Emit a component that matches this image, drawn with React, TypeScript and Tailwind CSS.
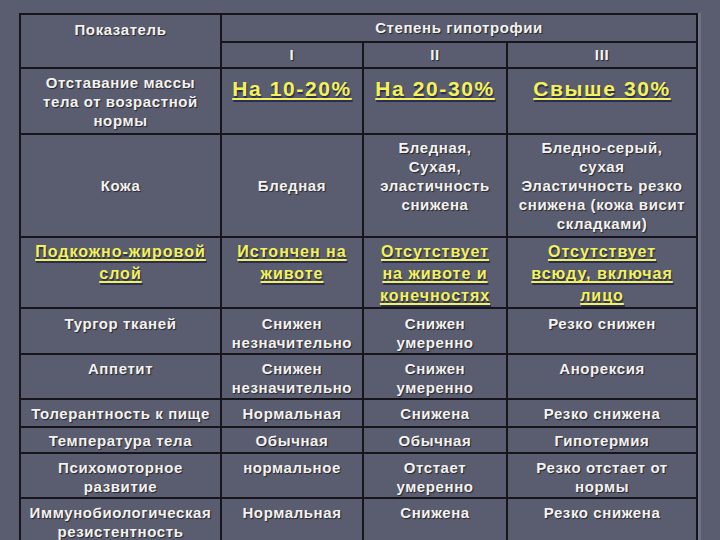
import React from "react";

const W = "text-[15px] leading-[19px] font-bold tracking-[0.6px] text-[#f2f2f2] [text-shadow:1px_1px_1px_rgba(0,0,0,0.6)] whitespace-nowrap";
const Y = "text-[16px] leading-[22px] font-bold tracking-[1px] text-[#f3f355] underline decoration-2 underline-offset-[2px] [text-decoration-skip-ink:none] [text-shadow:1px_2px_1px_#2a2c58] whitespace-nowrap";
const YB = "text-[21px] leading-[26px] font-bold tracking-[1.6px] text-[#f3f355] underline decoration-2 underline-offset-[2px] [text-decoration-skip-ink:none] [text-shadow:1px_2px_1px_#2a2c58] whitespace-nowrap";
const cell = "border-2 border-[#15151b] text-center px-1 p-0";

export default function App() {
  return (
    <div className="w-[720px] h-[540px] overflow-hidden bg-[#5a5d6f] font-['Liberation_Sans',Arial,sans-serif] pt-[13px] pl-[19px]">
      <table className="table-fixed border-collapse w-[679px] shadow-[3px_0_0_#6e7284]">
        <colgroup>
          <col className="w-[201px]" />
          <col className="w-[142px]" />
          <col className="w-[144px]" />
          <col className="w-[190px]" />
        </colgroup>
        <tbody>
          <tr className="h-[28px]">
            <td rowSpan={2} className={`${cell} align-top pt-[3px]`}>
              <span className={W}>Показатель</span>
            </td>
            <td colSpan={3} className={`${cell} align-middle`}>
              <span className={W}>Степень гипотрофии</span>
            </td>
          </tr>
          <tr className="h-[25px]">
            <td className={`${cell} align-middle`}><span className={W}>I</span></td>
            <td className={`${cell} align-middle`}><span className={W}>II</span></td>
            <td className={`${cell} align-middle`}><span className={W}>III</span></td>
          </tr>
          <tr className="h-[66px]">
            <td className={`${cell} align-middle`}>
              <div className={W}>Отставание массы<br />тела от возрастной<br />нормы</div>
            </td>
            <td className={`${cell} align-top pt-[7px]`}><span className={YB}>На 10-20%</span></td>
            <td className={`${cell} align-top pt-[7px]`}><span className={YB}>На 20-30%</span></td>
            <td className={`${cell} align-top pt-[7px]`}><span className={YB}>Свыше 30%</span></td>
          </tr>
          <tr className="h-[103px]">
            <td className={`${cell} align-middle`}><span className={W}>Кожа</span></td>
            <td className={`${cell} align-middle`}><span className={W}>Бледная</span></td>
            <td className={`${cell} align-top pt-[3px]`}>
              <div className={W}>Бледная,<br />Сухая,<br />эластичность<br />снижена</div>
            </td>
            <td className={`${cell} align-top pt-[3px]`}>
              <div className={W}>Бледно-серый,<br />сухая<br />Эластичность резко<br />снижена (кожа висит<br />складками)</div>
            </td>
          </tr>
          <tr className="h-[71px]">
            <td className={`${cell} align-top pt-[3px]`}>
              <div className={Y}>Подкожно-жировой<br />слой</div>
            </td>
            <td className={`${cell} align-top pt-[3px]`}>
              <div className={Y}>Истончен на<br />животе</div>
            </td>
            <td className={`${cell} align-top pt-[3px]`}>
              <div className={Y}>Отсутствует<br />на животе и<br />конечностях</div>
            </td>
            <td className={`${cell} align-top pt-[3px]`}>
              <div className={Y}>Отсутствует<br />всюду, включая<br />лицо</div>
            </td>
          </tr>
          <tr className="h-[46px]">
            <td className={`${cell} align-top pt-[5px]`}><div className={W}>Тургор тканей</div></td>
            <td className={`${cell} align-top pt-[5px]`}><div className={W}>Снижен<br />незначительно</div></td>
            <td className={`${cell} align-top pt-[5px]`}><div className={W}>Снижен<br />умеренно</div></td>
            <td className={`${cell} align-top pt-[5px]`}><div className={W}>Резко снижен</div></td>
          </tr>
          <tr className="h-[45px]">
            <td className={`${cell} align-top pt-[4px]`}><div className={W}>Аппетит</div></td>
            <td className={`${cell} align-top pt-[4px]`}><div className={W}>Снижен<br />незначительно</div></td>
            <td className={`${cell} align-top pt-[4px]`}><div className={W}>Снижен<br />умеренно</div></td>
            <td className={`${cell} align-top pt-[4px]`}><div className={W}>Анорексия</div></td>
          </tr>
          <tr className="h-[28px]">
            <td className={`${cell} align-middle`}><div className={W}>Толерантность к пище</div></td>
            <td className={`${cell} align-middle`}><div className={W}>Нормальная</div></td>
            <td className={`${cell} align-middle`}><div className={W}>Снижена</div></td>
            <td className={`${cell} align-middle`}><div className={W}>Резко снижена</div></td>
          </tr>
          <tr className="h-[26px]">
            <td className={`${cell} align-middle`}><div className={W}>Температура тела</div></td>
            <td className={`${cell} align-middle`}><div className={W}>Обычная</div></td>
            <td className={`${cell} align-middle`}><div className={W}>Обычная</div></td>
            <td className={`${cell} align-middle`}><div className={W}>Гипотермия</div></td>
          </tr>
          <tr className="h-[45px]">
            <td className={`${cell} align-top pt-[4px]`}><div className={W}>Психомоторное<br />развитие</div></td>
            <td className={`${cell} align-top pt-[4px]`}><div className={W}>нормальное</div></td>
            <td className={`${cell} align-top pt-[4px]`}><div className={W}>Отстает<br />умеренно</div></td>
            <td className={`${cell} align-top pt-[4px]`}><div className={W}>Резко отстает от<br />нормы</div></td>
          </tr>
          <tr className="h-[60px]">
            <td className={`${cell} align-top pt-[4px]`}><div className={W}>Иммунобиологическая<br />резистентность</div></td>
            <td className={`${cell} align-top pt-[4px]`}><div className={W}>Нормальная</div></td>
            <td className={`${cell} align-top pt-[4px]`}><div className={W}>Снижена</div></td>
            <td className={`${cell} align-top pt-[4px]`}><div className={W}>Резко снижена</div></td>
          </tr>
        </tbody>
      </table>
    </div>
  );
}
